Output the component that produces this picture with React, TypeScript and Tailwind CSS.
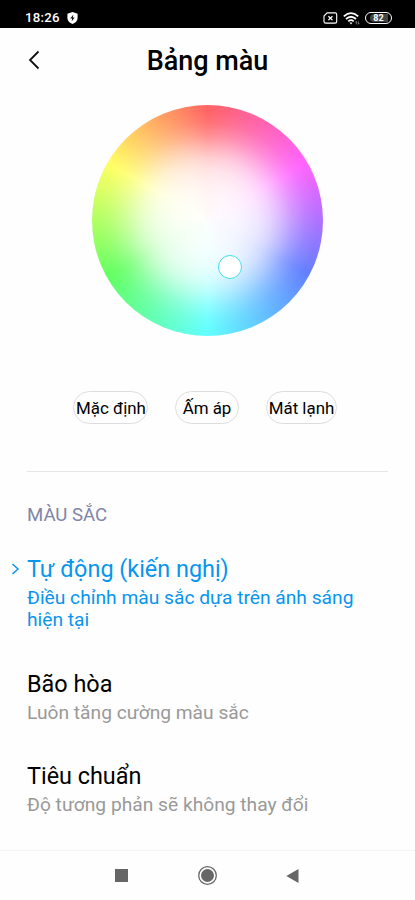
type OptionProps = { title: string; note: string; selected?: boolean; className: string };

function StatusBar() {
  return (
    <header className="flex h-[28px] shrink-0 items-center justify-between bg-black pt-[8px] pr-[23px] pl-[25px] text-white">
      <div className="flex items-center gap-[7px]">
        <span className="text-[13.2px] leading-[16px] font-medium tracking-[0.25px]">18:26</span>
        <svg className="h-[12px] w-[11px]" viewBox="0 0 11 12">
          <path d="M5.5 0 10.6 1.8V6c0 3-2.2 5-5.1 6C2.6 11 .4 9 .4 6V1.8Z" fill="#fff" />
          <path d="M6.4 2.4 3.3 6.6h1.9l-.6 3 3.1-4.2H5.8Z" fill="#111" />
        </svg>
      </div>
      <div className="flex items-center">
        <svg className="h-[12px] w-[15px]" viewBox="0 0 15 12" fill="none" stroke="#fff" strokeWidth="1.1">
          <path d="M4.1.9H12q1.7 0 1.7 1.7v6.8q0 1.7-1.7 1.7H2.7Q1 11.1 1 9.400V4Z" />
          <path d="m5.400 4.300 4 3.800m0-3.800-4 3.800" strokeWidth="1.3" />
        </svg>
        <svg className="ml-[5px] h-[13px] w-[17px]" viewBox="0 0 17 13" fill="none" stroke="#fff" strokeWidth="1.7">
          <path d="M.8 4.400Q8 -2 15.200 4.400M3 7Q8 2.500 13 7M5.300 9.300Q8 7 10.700 9.300" />
          <path d="M6.500 10.500h3L8 12.400Z" fill="#fff" stroke="none" />
          <path d="M13.300 12.300v-3m-1 1 1-1M15.300 9.300v3m1-1-1 1" stroke="#aaa" strokeWidth=".7" />
        </svg>
        <div className="ml-[5px] flex h-[12px] w-[27px] items-center justify-center rounded-full border border-white">
          <span className="flex h-[8px] w-[18px] items-center justify-center rounded-l-[4px] bg-[#444] text-[9px] leading-none font-bold">82</span>
        </div>
      </div>
    </header>
  );
}

function ColorWheel() {
  return (
    <div className="relative mx-auto mt-[12.5px] size-[231px] shrink-0 rounded-full bg-[radial-gradient(circle_closest-side,rgba(255,255,255,0.97)_0%,rgba(255,255,255,0.94)_20%,rgba(255,255,255,0.9)_32%,rgba(255,255,255,0.82)_44%,rgba(255,255,255,0.69)_54%,rgba(255,255,255,0.49)_64%,rgba(255,255,255,0.27)_74%,rgba(255,255,255,0.09)_85%,rgba(255,255,255,0)_95%),conic-gradient(#ff6464_0deg,#ff64ff_60deg,#6480ff_118deg,#64ffff_180deg,#64ff64_240deg,#ffff64_300deg,#ff6464_360deg)]">
      <div className="absolute top-[150px] left-[126px] size-[24px] rounded-full border border-[#3ce0e8] bg-white" />
    </div>
  );
}

function Option({ title, note, selected, className }: OptionProps) {
  return (
    <div className={`relative ${selected ? "text-[#0795ee]" : "text-black"} ${className}`}>
      {selected && (
        <svg className="absolute top-[10px] -left-[16px] h-[12px] w-[9px]" viewBox="0 0 9 12" fill="none" stroke="currentColor" strokeWidth="1.5">
          <path d="M1.500 1 7 6l-5.500 5" />
        </svg>
      )}
      <h3 className="text-[23.4px] leading-[32px]">{title}</h3>
      <p className={`mt-[2px] text-[19.22px] leading-[22px] ${selected ? "" : "text-[#999]"}`}>{note}</p>
    </div>
  );
}

export default function App() {
  return (
    <div className="flex h-[900px] w-[415px] flex-col overflow-hidden bg-[#fefefe] font-['Roboto',sans-serif]">
      <StatusBar />
      <div className="relative flex h-[64px] shrink-0 items-center justify-center pt-[1px]">
        <svg className="absolute top-[22px] left-[27px] h-[20px] w-[14px]" viewBox="0 0 14 20" fill="none" stroke="#111" strokeWidth="1.8">
          <path d="M11.500 1.500 3 10l8.500 8.500" />
        </svg>
        <h1 className="text-[27px] leading-[32px] font-medium text-black">Bảng màu</h1>
      </div>
      <ColorWheel />
      <div className="mt-[55.5px] ml-[73px] flex h-[33px] shrink-0 text-[16.9px] whitespace-nowrap text-black">
        <button className="flex w-[75px] items-center justify-center rounded-full border border-[#ddd] pt-[2px] pl-[1px]">Mặc định</button>
        <button className="ml-[27px] flex w-[64px] items-center justify-center rounded-full border border-[#ddd] pt-[2px]">Ấm áp</button>
        <button className="ml-[27px] flex w-[71px] items-center justify-center rounded-full border border-[#ddd] pt-[2px]">Mát lạnh</button>
      </div>
      <main className="mx-[27px] mt-[47px] flex grow flex-col border-t border-[#e6e6e6]">
        <h2 className="mt-[32px] text-[18.6px] leading-[22px] text-[#8085a8]">MÀU SẮC</h2>
        <Option className="mt-[27px]" selected title="Tự động (kiến nghị)" note="Điều chỉnh màu sắc dựa trên ánh sáng hiện tại" />
        <Option className="mt-[37px]" title="Bão hòa" note="Luôn tăng cường màu sắc" />
        <Option className="mt-[36px]" title="Tiêu chuẩn" note="Độ tương phản sẽ không thay đổi" />
      </main>
      <nav className="flex h-[50px] shrink-0 items-center border-t border-[#f3f3f3] pl-[115px]">
        <div className="size-[13px] bg-[#666]" />
        <svg className="ml-[69px] size-[20px]" viewBox="0 0 20 20">
          <circle cx="10.500" cy="9.500" r="8.800" fill="none" stroke="#666" strokeWidth="1.300" />
          <circle cx="10.500" cy="9.500" r="6.500" fill="#666" />
        </svg>
        <svg className="ml-[69px] h-[14px] w-[13px]" viewBox="0 0 13 14">
          <path d="M12.500 0v14L.3 7Z" fill="#666" />
        </svg>
      </nav>
    </div>
  );
}
